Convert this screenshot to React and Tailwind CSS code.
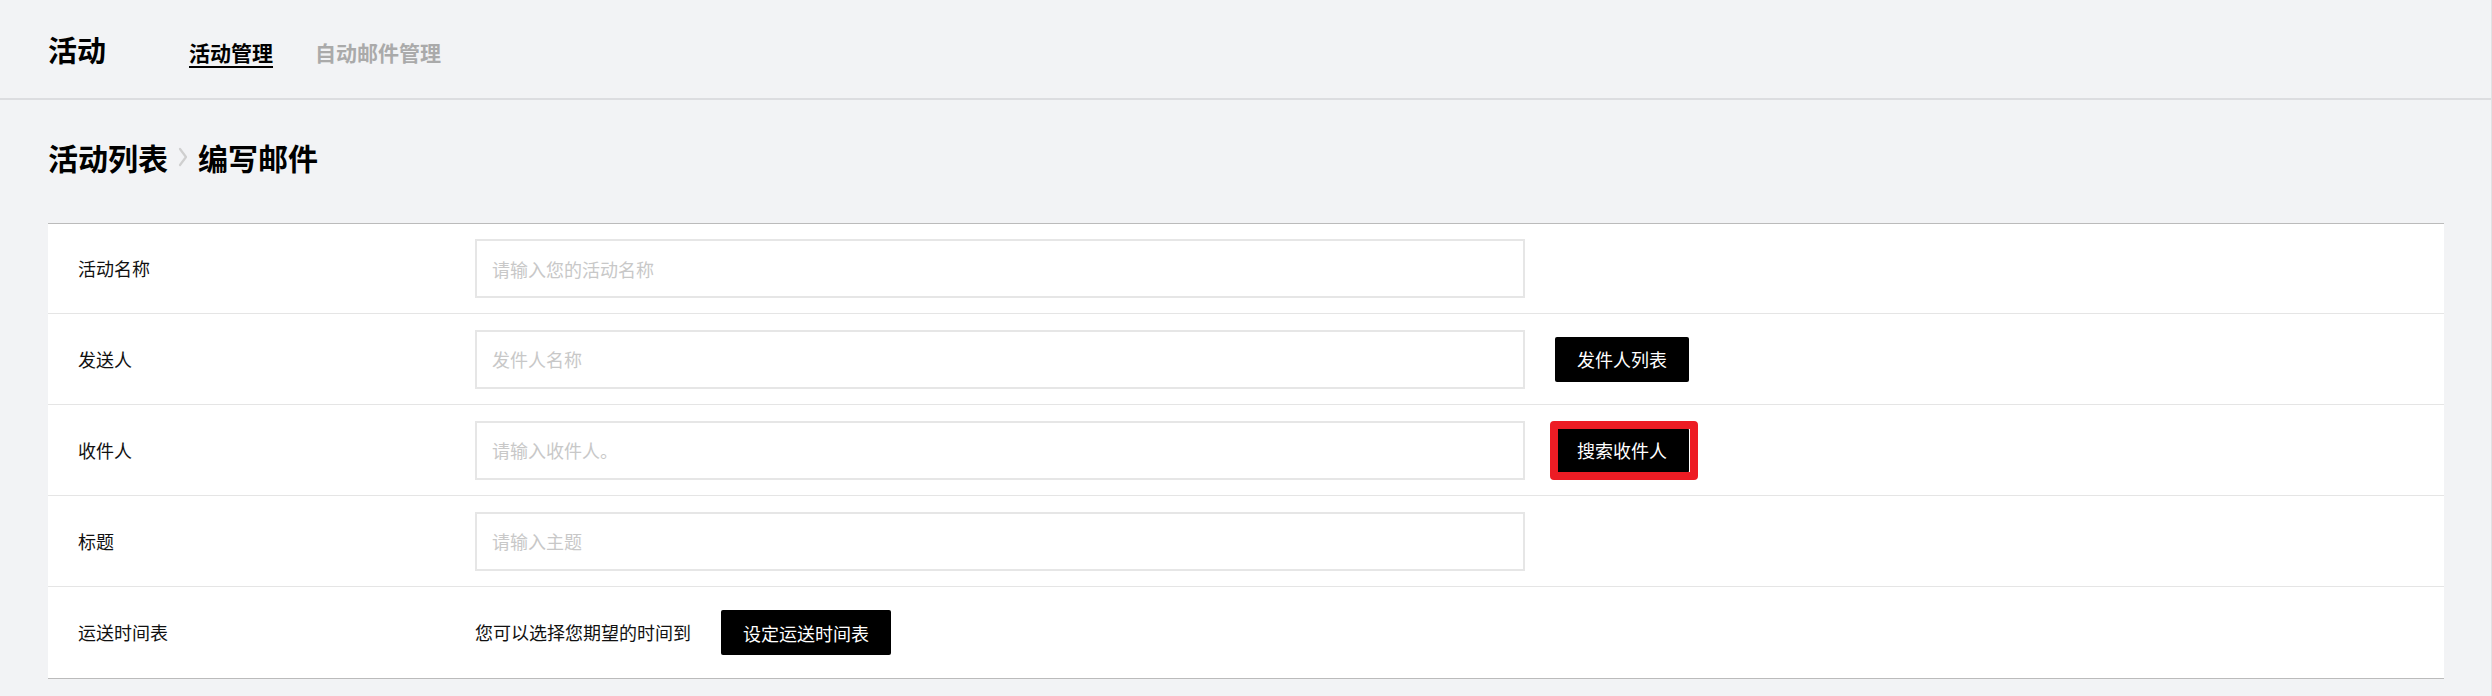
import React from 'react';

const font = { fontFamily: '"Noto Sans CJK SC", "Noto Sans", sans-serif' };

const Chevron = () => (
    <svg width="10" height="20" viewBox="0 0 10 20" className="mx-[10px]">
        <path d="M2 2 L8 10 L2 18" fill="none" stroke="#cfcfcf" strokeWidth="2.2" strokeLinecap="round" strokeLinejoin="round" />
    </svg>
);

const BlackButton = ({ children, highlight }) => (
    <div className="relative ml-[30px]">
        <button className="h-[45px] px-[22px] bg-black text-white text-[18px] leading-none rounded-[2px]">
            {children}
        </button>
        {highlight && (
            <span className="absolute -top-[7px] -bottom-[7px] -left-[5px] -right-[9px] border-[8px] border-[#ed1c24] rounded-[4px] pointer-events-none" />
        )}
    </div>
);

const TextField = ({ placeholder }) => (
    <input
        type="text"
        placeholder={placeholder}
        className="w-[1050px] h-[59px] border-2 border-[#e6e6e6] px-[15px] text-[18px] text-[#222] placeholder:text-[#c8c8c8] outline-none bg-white"
    />
);

const Row = ({ label, children }) => (
    <div className="flex items-center h-[91px] first:h-[90px]">
        <div className="w-[427px] pl-[30px] text-[18px] text-[#111]">{label}</div>
        {children}
    </div>
);

const App = () => {
    return (
        <div className="min-h-[696px] bg-[#f2f3f5] border-r border-[#e0e1e3]" style={font}>
            <header className="flex items-center h-[100px] px-12 border-b-2 border-[#dcdde0]">
                <h1 className="text-[29px] font-bold text-black leading-none">活动</h1>
                <nav className="flex gap-[42px] ml-[83px] pt-[6px] text-[21px] font-bold leading-none">
                    <a className="text-black underline underline-offset-[5px] decoration-2">活动管理</a>
                    <a className="text-[#aaaaaa]">自动邮件管理</a>
                </nav>
            </header>

            <div className="pl-12 pr-[47px]">
                <div className="flex items-center pt-[39px] pb-[48px] text-[30px] font-bold leading-[36px] text-black">
                    <span>活动列表</span>
                    <Chevron />
                    <span>编写邮件</span>
                </div>

                <div className="bg-white border-t border-b border-[#bbbbbb] divide-y divide-[#e5e5e5]">
                    <Row label="活动名称">
                        <TextField placeholder="请输入您的活动名称" />
                    </Row>
                    <Row label="发送人">
                        <TextField placeholder="发件人名称" />
                        <BlackButton>发件人列表</BlackButton>
                    </Row>
                    <Row label="收件人">
                        <TextField placeholder="请输入收件人。" />
                        <BlackButton highlight>搜索收件人</BlackButton>
                    </Row>
                    <Row label="标题">
                        <TextField placeholder="请输入主题" />
                    </Row>
                    <Row label="运送时间表">
                        <span className="text-[18px] text-[#111]">您可以选择您期望的时间到</span>
                        <BlackButton>设定运送时间表</BlackButton>
                    </Row>
                </div>
            </div>
        </div>
    );
};

export default App;
